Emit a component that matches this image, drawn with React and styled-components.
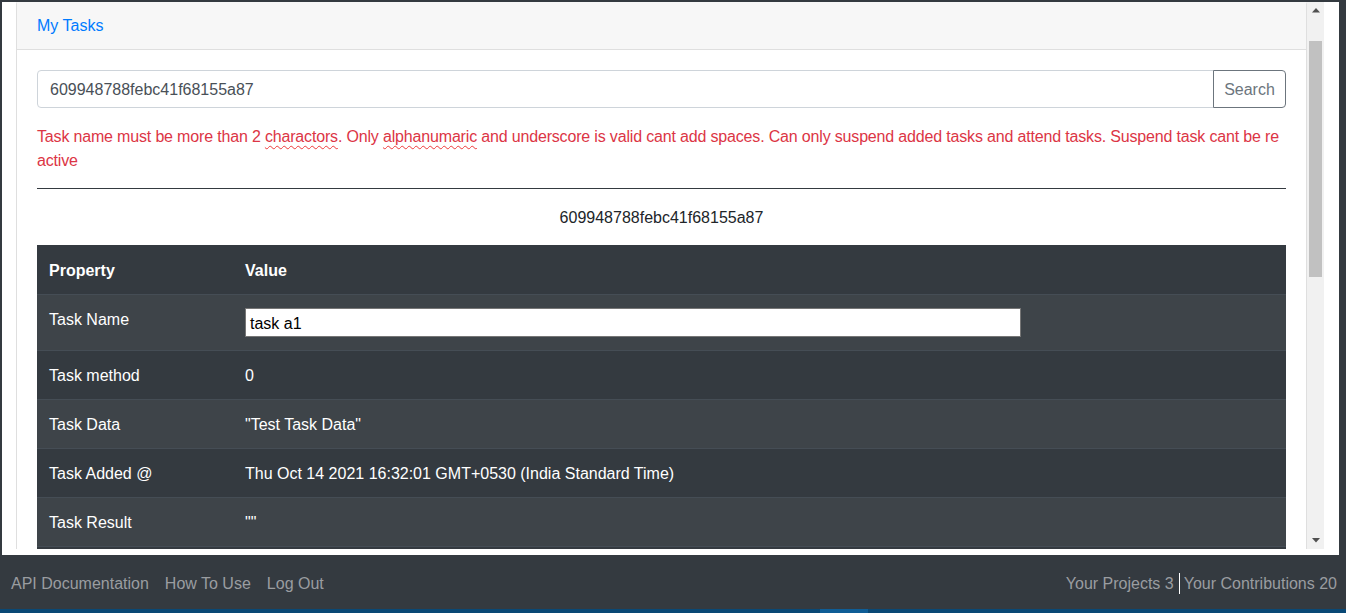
import React from "react";
import styled, { createGlobalStyle } from "styled-components";

const Global = createGlobalStyle`
  *, *::before, *::after { box-sizing: border-box; }
  html, body { margin: 0; padding: 0; overflow: hidden; }
  body {
    background: #343a40;
    font-family: "Liberation Sans", Arial, sans-serif;
    font-size: 16px;
    line-height: 24px;
    color: #212529;
  }
`;

const Root = styled.div`
  height: 613px;
  display: flex;
  flex-direction: column;
`;

const Frame = styled.div`
  margin: 2px 7px 0 2px;
  height: 553px;
  background: #fff;
  padding: 0 15px 6px 0;
  display: flex;
`;

const Viewport = styled.div`
  flex: 1;
  overflow: hidden;
  padding-left: 14px;
`;

const ScrollTrack = styled.div`
  width: 17px;
  background: #f1f1f1;
  display: flex;
  flex-direction: column;
  align-items: center;
`;

const ArrowBtn = styled.div`
  width: 17px;
  height: 17px;
  display: flex;
  align-items: center;
  justify-content: center;
  margin-top: ${(p) => (p.$down ? "auto" : "0")};
`;

const Thumb = styled.div`
  width: 13px;
  height: 236px;
  margin-top: 22px;
  background: #c1c1c1;
`;

const Card = styled.div`
  margin-top: -2px;
  border: 1px solid #dfdfdf;
  border-radius: 4px;
  background: #fff;
`;

const CardHeader = styled.div`
  background: #f7f7f7;
  border-bottom: 1px solid #dfdfdf;
  padding: 13px 20px 11px;
  color: #007bff;
`;

const CardBody = styled.div`
  padding: 20px;
`;

const InputGroup = styled.div`
  display: flex;
  height: 38px;
`;

const SearchInput = styled.div`
  flex: 1;
  border: 1px solid #ced4da;
  border-radius: 4px 0 0 4px;
  padding: 7px 12px 5px;
  color: #495057;
`;

const SearchButton = styled.button`
  font: inherit;
  line-height: 24px;
  width: 73px;
  text-align: center;
  background: #fff;
  color: #6c757d;
  border: 1px solid #6c757d;
  border-radius: 0 4px 4px 0;
  padding: 7px 0 5px;
  margin-left: -1px;
`;

const ErrorText = styled.p`
  margin: 16px 0 0;
  padding-top: 1px;
  margin-bottom: -1px;
  color: #dc3545;
  letter-spacing: -0.17px;
`;

const Misspelled = styled.span`
  text-decoration-line: underline;
  text-decoration-style: wavy;
  text-decoration-color: #ee3b3b;
  text-decoration-thickness: 1px;
  text-underline-offset: 3px;
`;

const Rule = styled.hr`
  margin: 16px 0;
  border: 0;
  border-top: 1px solid #343a40;
`;

const CenterId = styled.p`
  margin: 0 0 16px;
  padding-top: 1px;
  height: 24px;
  text-align: center;
`;

const Table = styled.table`
  width: 100%;
  border-collapse: collapse;
  background: #343a40;
  color: #fff;
`;

const Th = styled.th`
  text-align: left;
  font-weight: 700;
  padding: 14px 12px 11px;
  width: ${(p) => p.$w || "auto"};
  vertical-align: top;
`;

const Tr = styled.tr`
  border-top: 1px solid #454d55;
  background: ${(p) => (p.$striped ? "rgba(255,255,255,0.05)" : "transparent")};
`;

const Td = styled.td`
  padding: 13px 12px 11px;
  vertical-align: top;
`;

const NameInput = styled.div`
  width: 776px;
  height: 29px;
  margin: 0 0 2px;
  background: #fff;
  border: 1px solid #767676;
  color: #000;
  padding: 2px 4px 0;
  line-height: 25px;
`;

const Footer = styled.footer`
  height: 54px;
  display: flex;
  align-items: center;
  justify-content: space-between;
  padding: 3px 9px 0 3px;
  color: #9a9da0;
`;

const NavLinks = styled.nav`
  display: flex;
`;

const NavLink = styled.span`
  padding: 0 8px;
`;

const Stats = styled.div`
  display: flex;
  align-items: center;
`;

const Divider = styled.span`
  width: 1px;
  height: 21px;
  background: #fff;
  margin: 0 4px 0 5px;
`;

const Strip = styled.div`
  height: 4px;
  background: #094875;
  display: flex;
`;

const StripSegment = styled.div`
  width: 48px;
  margin-left: 820px;
  background: #0e5d96;
`;

const Tri = ({ down }) => (
  <svg width="8" height="5" viewBox="0 0 8 5">
    <path d={down ? "M0 0 L8 0 L4 4.5 Z" : "M0 4.5 L8 4.5 L4 0 Z"} fill="#505050" />
  </svg>
);

const rows = [
  { k: "Task method", v: "0" },
  { k: "Task Data", v: "\"Test Task Data\"" },
  { k: "Task Added @", v: "Thu Oct 14 2021 16:32:01 GMT+0530 (India Standard Time)" },
  { k: "Task Result", v: "\"\"" },
];

export default function App() {
  return (
    <Root>
      <Global />
      <Frame>
        <Viewport>
          <Card>
            <CardHeader>My Tasks</CardHeader>
            <CardBody>
              <InputGroup>
                <SearchInput>609948788febc41f68155a87</SearchInput>
                <SearchButton>Search</SearchButton>
              </InputGroup>
              <ErrorText>
                Task name must be more than 2 <Misspelled>charactors</Misspelled>. Only{" "}
                <Misspelled>alphanumaric</Misspelled> and underscore is valid cant add spaces. Can only
                suspend added tasks and attend tasks. Suspend task cant be re active
              </ErrorText>
              <Rule />
              <CenterId>609948788febc41f68155a87</CenterId>
              <Table>
                <thead>
                  <tr>
                    <Th $w="196px">Property</Th>
                    <Th>Value</Th>
                  </tr>
                </thead>
                <tbody>
                  <Tr $striped>
                    <Td>Task Name</Td>
                    <Td>
                      <NameInput>task a1</NameInput>
                    </Td>
                  </Tr>
                  {rows.map((r, i) => (
                    <Tr key={r.k} $striped={i % 2 === 1}>
                      <Td>{r.k}</Td>
                      <Td>{r.v}</Td>
                    </Tr>
                  ))}
                  <Tr>
                    <Td>Task Status</Td>
                    <Td>0</Td>
                  </Tr>
                </tbody>
              </Table>
            </CardBody>
          </Card>
        </Viewport>
        <ScrollTrack>
          <ArrowBtn>
            <Tri />
          </ArrowBtn>
          <Thumb />
          <ArrowBtn $down>
            <Tri down />
          </ArrowBtn>
        </ScrollTrack>
      </Frame>
      <Footer>
        <NavLinks>
          <NavLink>API Documentation</NavLink>
          <NavLink>How To Use</NavLink>
          <NavLink>Log Out</NavLink>
        </NavLinks>
        <Stats>
          <span>Your Projects 3</span>
          <Divider />
          <span>Your Contributions 20</span>
        </Stats>
      </Footer>
      <Strip>
        <StripSegment />
      </Strip>
    </Root>
  );
}
